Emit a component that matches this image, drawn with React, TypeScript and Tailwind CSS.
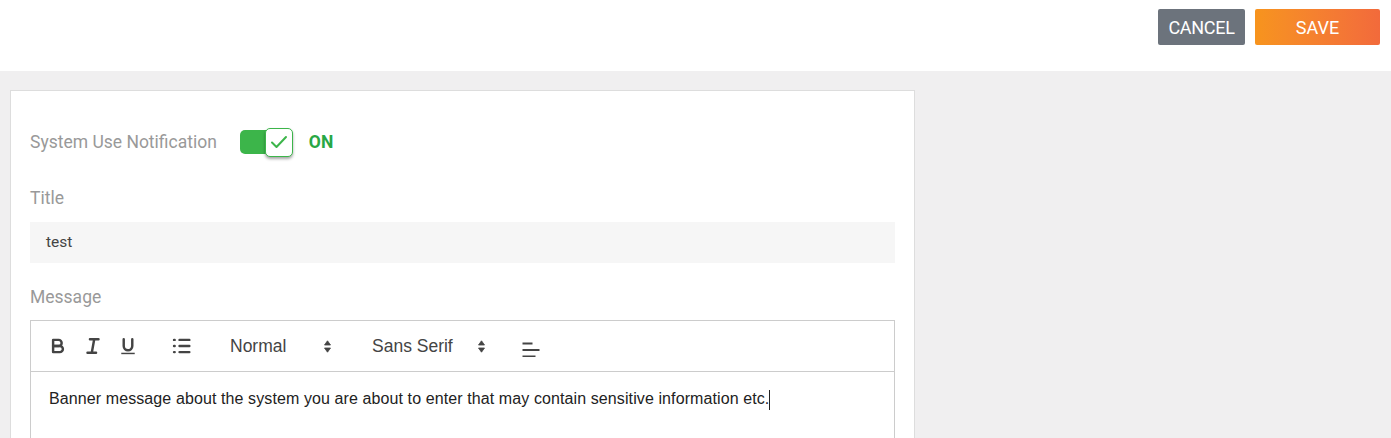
import React from "react";

const UpDown = () => (
  <svg width="7" height="13" viewBox="0 0 7 13">
    <path d="M0.5 5 L3.5 0.8 L6.5 5 Z M0.5 8 L3.5 12.2 L6.5 8 Z" fill="#444" stroke="#444" strokeWidth="0.8" strokeLinejoin="round" />
  </svg>
);

const sp = { stroke: "#444", strokeWidth: 2, fill: "none", strokeLinecap: "round" as const, strokeLinejoin: "round" as const };

export default function App() {
  return (
    <div className="w-[1391px] h-[438px] overflow-hidden bg-[#f0eff0] font-['Roboto',sans-serif]">
      <div className="h-[71px] bg-white flex items-start justify-end gap-[10px] pt-[9px] pr-[11px]">
        <button className="h-[36px] w-[87px] rounded-[2px] bg-[#6c737c] text-white text-[18px] tracking-[-0.3px]">
          CANCEL
        </button>
        <button className="h-[36px] w-[125px] rounded-[2px] bg-gradient-to-r from-[#f7941d] to-[#f26a3b] text-white text-[18px]">
          SAVE
        </button>
      </div>
      <div className="ml-[10px] mt-[19px] w-[905px] h-[400px] bg-white border border-[#dddddd] px-[19px] pt-[36px]">
        <div className="flex items-center h-[30px]">
          <span className="text-[17.5px] text-[#999999]">System Use Notification</span>
          <div className="ml-[23px] relative w-[53px] h-[29px] flex items-center">
            <div className="w-[52px] h-[24px] rounded-[5px] bg-[#3cb54a]" />
            <div className="absolute right-0 top-0 w-[28px] h-[29px] rounded-[5px] bg-white border border-[#3cb54a] shadow-[0_2px_3px_rgba(0,0,0,0.35)] flex items-center justify-center">
              <svg width="18" height="14" viewBox="0 0 18 14" fill="none">
                <path d="M2 7.5 L6.5 12 L16 2" stroke="#3cb54a" strokeWidth="2" strokeLinecap="round" strokeLinejoin="round" />
              </svg>
            </div>
          </div>
          <span className="ml-[16px] text-[17.5px] font-bold text-[#28a745]">ON</span>
        </div>
        <div className="mt-[29px] text-[17.5px] text-[#999999] leading-[24px]">Title</div>
        <div className="mt-[12px] h-[41px] bg-[#f6f6f6] flex items-center px-[16px] text-[15.5px] text-[#444444]">
          test
        </div>
        <div className="mt-[22px] text-[17.5px] text-[#999999] leading-[24px]">Message</div>
        <div className="mt-[11px] border border-[#cccccc] font-['Liberation_Sans',Arial,sans-serif]">
          <div className="h-[51px] border-b border-[#cccccc] flex items-center pl-[16px] text-[#444444]">
            <svg width="22" height="22" viewBox="0 0 18 18">
              <path {...sp} d="M5,4H9.5A2.5,2.5,0,0,1,12,6.5v0A2.5,2.5,0,0,1,9.5,9H5V4Z" />
              <path {...sp} d="M5,9h5.5A2.5,2.5,0,0,1,13,11.5v0A2.5,2.5,0,0,1,10.5,14H5V9Z" />
            </svg>
            <svg className="ml-[13px]" width="22" height="22" viewBox="0 0 18 18">
              <path {...sp} d="M6.5 3.5 H13.5 M4.5 14.5 H11.5 M10 3.5 L8 14.5" />
            </svg>
            <svg className="ml-[13px]" width="22" height="22" viewBox="0 0 18 18">
              <path {...sp} d="M5.5,3.5V9a3.5,3.5,0,0,0,7,0V3.5" />
              <rect x="3.5" y="14.5" width="11" height="1.2" fill="#444" />
            </svg>
            <svg className="ml-[32px]" width="22" height="22" viewBox="0 0 18 18">
              <path {...sp} d="M7 4 H15 M7 9 H15 M7 14 H15" />
              <path {...sp} d="M2.5 4 H3 M2.5 9 H3 M2.5 14 H3" />
            </svg>
            <span className="ml-[37px] w-[94px] text-[17.5px] text-[#444]">Normal</span>
            <span className="flex">
              <UpDown />
            </span>
            <span className="ml-[41px] w-[106px] text-[17.5px] text-[#444]">Sans Serif</span>
            <span className="flex">
              <UpDown />
            </span>
            <span className="ml-[37px] flex mt-[6px]">
              <svg width="18" height="15" viewBox="0 0 18 15">
                <path d="M0.5 1.5 H10.5 M0.5 8 H17.5 M0.5 14.5 H13.5" stroke="#444" strokeWidth="2.2" fill="none" />
              </svg>
            </span>
          </div>
          <div className="pt-[15px] pl-[18px] text-[16px] tracking-[0.1px] text-[#222222] leading-[24px] h-[100px]">
            Banner message about the system you are about to enter that may contain sensitive information etc.
            <span className="inline-block w-[1px] h-[20px] bg-[#222] align-middle" />
          </div>
        </div>
      </div>
    </div>
  );
}
